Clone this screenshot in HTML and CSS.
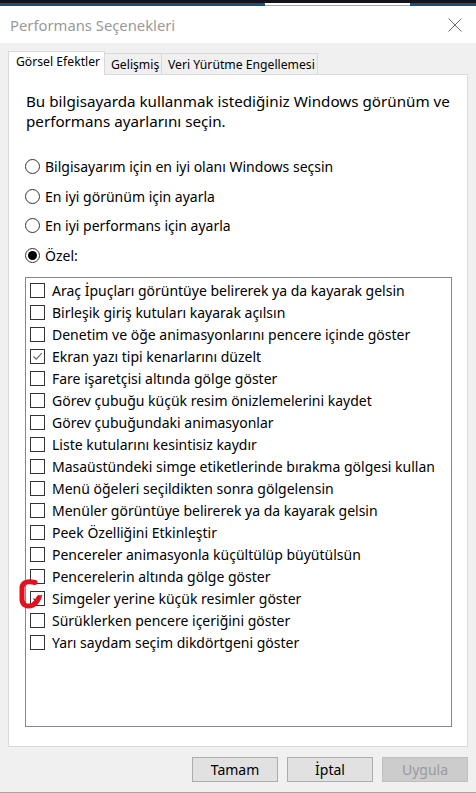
FILE: index.html
```html
<!DOCTYPE html>
<html lang="tr">
<head>
<meta charset="utf-8">
<title>Performans Seçenekleri</title>
<link rel="stylesheet" href="styles.css">
</head>
<body>
<div class="window">
  <div class="topstrip"></div>
  <div class="accent"><div class="seg"></div></div>
  <div class="titlebar">
    <span class="title">Performans Seçenekleri</span>
    <svg class="close" width="14" height="14" viewBox="0 0 14 14"><path d="M0.5 0.5L13.5 13.5M13.5 0.5L0.5 13.5"/></svg>
  </div>
  <div class="body">
    <div class="tabs">
      <div class="tab active">Görsel Efektler</div>
      <div class="tab t2">Gelişmiş</div>
      <div class="tab t3">Veri Yürütme Engellemesi</div>
    </div>
    <div class="panel">
      <p class="intro">Bu bilgisayarda kullanmak istediğiniz Windows görünüm ve<br>performans ayarlarını seçin.</p>
      <div class="radios">
        <div class="radio"><span class="circle"></span>Bilgisayarım için en iyi olanı Windows seçsin</div>
        <div class="radio"><span class="circle"></span>En iyi görünüm için ayarla</div>
        <div class="radio"><span class="circle"></span>En iyi performans için ayarla</div>
        <div class="radio"><span class="circle on"></span>Özel:</div>
      </div>
      <div class="list">
        <div class="item"><span class="cb"></span>Araç İpuçları görüntüye belirerek ya da kayarak gelsin</div>
        <div class="item"><span class="cb"></span>Birleşik giriş kutuları kayarak açılsın</div>
        <div class="item"><span class="cb"></span>Denetim ve öğe animasyonlarını pencere içinde göster</div>
        <div class="item"><span class="cb"><svg viewBox="0 0 13 13" width="13" height="13"><path d="M2.5 6.5L5.2 9.2L10.8 3.2"/></svg></span>Ekran yazı tipi kenarlarını düzelt</div>
        <div class="item"><span class="cb"></span>Fare işaretçisi altında gölge göster</div>
        <div class="item"><span class="cb"></span>Görev çubuğu küçük resim önizlemelerini kaydet</div>
        <div class="item"><span class="cb"></span>Görev çubuğundaki animasyonlar</div>
        <div class="item"><span class="cb"></span>Liste kutularını kesintisiz kaydır</div>
        <div class="item"><span class="cb"></span>Masaüstündeki simge etiketlerinde bırakma gölgesi kullan</div>
        <div class="item"><span class="cb"></span>Menü öğeleri seçildikten sonra gölgelensin</div>
        <div class="item"><span class="cb"></span>Menüler görüntüye belirerek ya da kayarak gelsin</div>
        <div class="item"><span class="cb"></span>Peek Özelliğini Etkinleştir</div>
        <div class="item"><span class="cb"></span>Pencereler animasyonla küçültülüp büyütülsün</div>
        <div class="item"><span class="cb"></span>Pencerelerin altında gölge göster</div>
        <div class="item"><span class="cb dark"><svg viewBox="0 0 13 13" width="13" height="13"><path d="M2.5 6.5L5.2 9.2L10.8 3.2"/></svg></span>Simgeler yerine küçük resimler göster
          <svg class="mark" width="32" height="34" viewBox="0 0 32 34"><path d="M19 4.5C12.5 3 7 3.5 6 9L6 21C6 27.5 11.5 29.5 17 27C19.5 25.5 21.5 23 23 19.5"/></svg>
        </div>
        <div class="item"><span class="cb"></span>Sürüklerken pencere içeriğini göster</div>
        <div class="item"><span class="cb"></span>Yarı saydam seçim dikdörtgeni göster</div>
      </div>
    </div>
    <div class="buttons">
      <button class="btn">Tamam</button>
      <button class="btn">İptal</button>
      <button class="btn disabled">Uygula</button>
    </div>
  </div>
</div>
</body>
</html>
```

FILE: styles.css
```css
* { box-sizing: border-box; }
html, body { margin: 0; padding: 0; }
body {
  width: 476px;
  height: 793px;
  overflow: hidden;
  background: #f0f0f0;
  font-family: "Noto Sans", "DejaVu Sans", sans-serif;
  font-size: 14px;
  color: #000;
}
.window {
  height: 793px;
  display: flex;
  flex-direction: column;
  border-bottom: 1px solid #a5a5a5;
}
.topstrip { height: 3px; background: #131319; }
.accent { height: 3px; background: #1d4f79; }
.seg {
  margin-left: 265px;
  width: 145px;
  height: 3px;
  background: #ffffff;
  border-bottom: 1px solid #a3a3a3;
}
.titlebar {
  height: 37px;
  background: #ffffff;
  display: flex;
  align-items: center;
  justify-content: space-between;
  padding: 0 14px 0 10px;
}
.title { color: #999999; font-size: 14.8px; }
.close path { stroke: #6e6e6e; stroke-width: 1; fill: none; }
.body {
  flex: 1;
  padding: 8px 8px 0 8px;
  display: flex;
  flex-direction: column;
}
.tabs {
  height: 23px;
  display: flex;
  align-items: flex-end;
}
.tab {
  height: 21px;
  border: 1px solid #d9d9d9;
  border-bottom: none;
  border-left: none;
  background: #f0f0f0;
  padding: 0 0 0 6px;
  display: flex;
  align-items: center;
  white-space: nowrap;
  font-size: 12.2px;
}
.tab.active {
  height: 24px;
  margin-bottom: -1px;
  background: #ffffff;
  border-left: 1px solid #d9d9d9;
  position: relative;
  z-index: 1;
  width: 97px;
  padding-bottom: 4px;
  padding-left: 7px;
}
.tab.t2 { width: 57px; }
.tab.t3 { width: 156px; }
.panel {
  height: 673px;
  background: #ffffff;
  border: 1px solid #d9d9d9;
  padding: 16px 15px 0 16px;
}
.intro { margin: 0; line-height: 20px; padding-left: 1px; font-size: 15.2px; }
.radios { margin-top: 21px; }
.radio {
  height: 29.5px;
  display: flex;
  align-items: center;
}
.circle {
  width: 15px;
  height: 15px;
  border: 1px solid #333333;
  border-radius: 50%;
  margin-right: 5px;
  display: flex;
  align-items: center;
  justify-content: center;
}
.circle.on::after {
  content: "";
  width: 9px;
  height: 9px;
  border-radius: 50%;
  background: #000;
}
.list {
  margin-top: 7px;
  width: 427px;
  height: 450px;
  border: 1px solid #828790;
  padding: 1px 0 0 4px;
}
.item {
  height: 22px;
  display: flex;
  align-items: center;
  white-space: nowrap;
  position: relative;
}
.cb {
  width: 15px;
  height: 15px;
  border: 1px solid #333333;
  margin-right: 7px;
  flex: none;
  display: flex;
}
.cb svg path { stroke: #666666; stroke-width: 1.1; fill: none; }
.cb.dark svg path { stroke: #444444; stroke-width: 1.3; }
.mark {
  position: absolute;
  left: -14px;
  top: -9px;
  overflow: visible;
  z-index: 2;
}
.mark path {
  stroke: #e3101b;
  stroke-width: 5;
  fill: none;
  stroke-linecap: round;
  stroke-linejoin: round;
}
.buttons {
  margin-top: 10px;
  display: flex;
  justify-content: flex-end;
  gap: 9px;
}
.btn {
  width: 86px;
  height: 25px;
  background: #e1e1e1;
  border: 1px solid #adadad;
  font-family: "Noto Sans", "DejaVu Sans", sans-serif;
  font-size: 14px;
  color: #000;
  padding: 0;
}
.btn.disabled {
  background: #cccccc;
  border-color: #bfbfbf;
  color: #9a9a9a;
}
```
